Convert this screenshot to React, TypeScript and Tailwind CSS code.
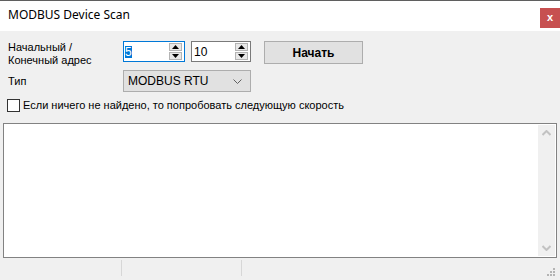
import React from "react";

function SpinButtons() {
  return (
    <div className="flex flex-col gap-[1px] mr-[2px]">
      <div className="w-[13px] h-[8px] bg-[#e8e8e8] border border-[#b4b4b4] flex items-center justify-center">
        <svg width="7" height="4" viewBox="0 0 7 4"><path d="M0 4 L3.5 0 L7 4 Z" fill="#000" /></svg>
      </div>
      <div className="w-[13px] h-[8px] bg-[#e8e8e8] border border-[#b4b4b4] flex items-center justify-center">
        <svg width="7" height="4" viewBox="0 0 7 4"><path d="M0 0 L3.5 4 L7 0 Z" fill="#000" /></svg>
      </div>
    </div>
  );
}

export default function App() {
  return (
    <div className="w-[560px] h-[280px] flex flex-col bg-[#f0f0f0] border-t border-[#5f5f5f] overflow-hidden">
      <div className="h-[30px] bg-white flex items-start justify-between shrink-0">
        <span className="pl-[8px] pt-[6px] text-[12px] leading-[16px] text-black font-['Noto_Sans',sans-serif]">
          MODBUS Device Scan
        </span>
        <div className="mt-[7px] w-[20px] h-[20px] bg-[#c75050] flex items-center justify-center text-white text-[11px] leading-none font-bold font-['Liberation_Sans',sans-serif] pb-[2px]">
          x
        </div>
      </div>
      <div className="flex-1 flex flex-col pt-[10px] font-['Liberation_Sans',sans-serif] text-[11px] text-black">
        <div className="flex items-start h-[23px]">
          <div className="w-[123px] pl-[8px] leading-[13px] shrink-0">
            Начальный /<br />Конечный адрес
          </div>
          <div className="w-[62px] h-[21px] bg-white border border-[#0078d7] flex items-center justify-between">
            <div className="ml-[1px] flex items-center">
              <span className="bg-[#0078d7] text-white text-[12px] leading-[12px] px-[0px]">5</span>
            </div>
            <SpinButtons />
          </div>
          <div className="ml-[6px] w-[60px] h-[21px] bg-white border border-[#7a7a7a] flex items-center justify-between">
            <span className="ml-[2px] text-[12px] leading-[12px]">10</span>
            <SpinButtons />
          </div>
          <div className="ml-[13px] w-[99px] h-[23px] bg-[#e1e1e1] border border-[#adadad] flex items-center justify-center font-bold text-[12px]">
            Начать
          </div>
        </div>
        <div className="mt-[6px] flex items-center h-[22px]">
          <div className="w-[123px] pl-[8px] mt-[1px] shrink-0">Тип</div>
          <div className="w-[128px] h-[22px] bg-[#e1e1e1] border border-[#adadad] flex items-center justify-between pl-[4px] pr-[8px]">
            <span className="text-[12px]">MODBUS RTU</span>
            <svg width="9" height="5" viewBox="0 0 9 5">
              <path d="M0.5 0.5 L4.5 4.5 L8.5 0.5" fill="none" stroke="#606060" strokeWidth="1" />
            </svg>
          </div>
        </div>
        <div className="mt-[7px] flex items-center h-[13px] pl-[7px]">
          <div className="w-[13px] h-[13px] bg-white border border-[#333333] shrink-0" />
          <span className="ml-[3px]">Если ничего не найдено, то попробовать следующую скорость</span>
        </div>
        <div className="mt-[11px] mx-[3px] flex-1 bg-white border border-[#828282] p-[1px] flex justify-end">
          <div className="w-[17px] bg-[#f0f0f0] flex flex-col justify-between items-center py-[5px]">
            <svg width="9" height="6" viewBox="0 0 9 6">
              <path d="M0.5 5 L4.5 1 L8.5 5" fill="none" stroke="#c2c2c2" strokeWidth="2" />
            </svg>
            <svg width="9" height="6" viewBox="0 0 9 6">
              <path d="M0.5 1 L4.5 5 L8.5 1" fill="none" stroke="#c2c2c2" strokeWidth="2" />
            </svg>
          </div>
        </div>
        <div className="h-[22px] flex items-start shrink-0">
          <div className="w-[122px] h-[16px] mt-[2px] border-r border-[#d7d7d7]" />
          <div className="w-[120px] h-[16px] mt-[2px] border-r border-[#d7d7d7]" />
          <div className="ml-auto mt-[10px] mr-[4px]">
            <svg width="9" height="9" viewBox="0 0 9 9">
              <rect x="6" y="0" width="2" height="2" fill="#b4b4b4" />
              <rect x="3" y="3" width="2" height="2" fill="#b4b4b4" />
              <rect x="6" y="3" width="2" height="2" fill="#b4b4b4" />
              <rect x="0" y="6" width="2" height="2" fill="#b4b4b4" />
              <rect x="3" y="6" width="2" height="2" fill="#b4b4b4" />
              <rect x="6" y="6" width="2" height="2" fill="#b4b4b4" />
            </svg>
          </div>
        </div>
      </div>
    </div>
  );
}
